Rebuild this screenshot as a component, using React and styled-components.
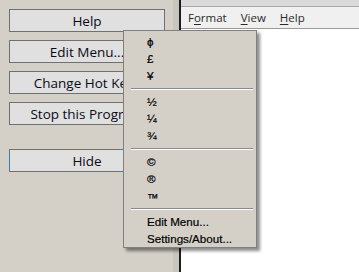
import React from 'react';
import styled, { createGlobalStyle } from 'styled-components';

const GlobalStyle = createGlobalStyle`
  html, body { margin: 0; padding: 0; }
  body { background: #d4d0c8; overflow: hidden; }
`;

const Screen = styled.div`
  position: relative;
  width: 359px;
  height: 272px;
  display: flex;
  overflow: hidden;
`;

const LeftPanel = styled.div`
  width: 173px;
  background: #d4d0c8;
  padding: 9px 0 0 9px;
  box-sizing: border-box;
  display: flex;
  flex-direction: column;
  gap: 8px;
`;

const Button = styled.div`
  width: 156px;
  height: 23px;
  box-sizing: border-box;
  border: 1px solid ${p => (p.focused ? '#3c7fb1' : '#707070')};
  background: #e0e0e0;
  display: flex;
  align-items: center;
  justify-content: center;
  white-space: nowrap;
  overflow: hidden;
  font-family: "Open Sans", "Noto Sans", sans-serif;
  font-size: 13.5px;
  color: #0a0a14;
  margin-top: ${p => (p.spaced ? '16px' : '0')};
`;

const Strip = styled.div`
  width: 6px;
  background: #c8c5bf;
`;

const Divider = styled.div`
  width: 2px;
  background: #1c1c1c;
`;

const Editor = styled.div`
  flex: 1;
  display: flex;
  flex-direction: column;
  background: #fff;
`;

const TopBand = styled.div`
  height: 6px;
  background: #dadada;
  border-bottom: 1px solid #a8a8a8;
`;

const MenuBar = styled.div`
  height: 21px;
  background: #f0f0f0;
  border-bottom: 1px solid #9a9a9a;
  display: flex;
  align-items: center;
  gap: 14px;
  padding-left: 7px;
  font-family: "Open Sans", "Noto Sans", sans-serif;
  font-size: 11.5px;
  color: #2a2a2a;
`;

const Key = styled.span`
  text-decoration: underline;
  text-underline-offset: 2px;
`;

const Menu = styled.div`
  position: absolute;
  left: 123px;
  top: 30px;
  width: 134px;
  height: 218px;
  box-sizing: border-box;
  background: #d4d0c8;
  border: 1px solid #808080;
  box-shadow: 3px 3px 3px rgba(0, 0, 0, 0.45);
  padding: 2px 0;
  font-family: "Liberation Sans", Arial, sans-serif;
  color: #000;
`;

const Item = styled.div`
  height: 17px;
  box-sizing: border-box;
  display: flex;
  align-items: center;
  padding-left: 23px;
  padding-top: ${p => (p.raised ? '4px' : '0')};
  font-size: 11.6px;
  -webkit-text-stroke: 0.2px #000;
`;

const Separator = styled.div`
  height: 9px;
  display: flex;
  align-items: center;
  padding: 0 3px 0 7px;

  &::before {
    content: '';
    flex: 1;
    height: 1px;
    background: #8a8a8a;
    border-bottom: 1px solid #fff;
  }
`;

const symbolGroups = [
  ['ϕ', '£', '¥'],
  ['½', '¼', '¾'],
  ['©', '®', '™'],
];

export default function App() {
  return (
    <>
      <GlobalStyle />
      <Screen>
        <LeftPanel>
          <Button>Help</Button>
          <Button>Edit Menu...</Button>
          <Button>Change Hot Keys</Button>
          <Button>Stop this Program</Button>
          <Button spaced focused>Hide</Button>
        </LeftPanel>
        <Strip />
        <Divider />
        <Editor>
          <TopBand />
          <MenuBar>
            <span>F<Key>o</Key>rmat</span>
            <span><Key>V</Key>iew</span>
            <span><Key>H</Key>elp</span>
          </MenuBar>
        </Editor>
        <Menu>
          {symbolGroups.map((group, gi) => (
            <React.Fragment key={gi}>
              {group.map(s => (
                <Item key={s} raised={s === '™'}>{s}</Item>
              ))}
              <Separator />
            </React.Fragment>
          ))}
          <Item>Edit Menu...</Item>
          <Item>Settings/About...</Item>
        </Menu>
      </Screen>
    </>
  );
}
